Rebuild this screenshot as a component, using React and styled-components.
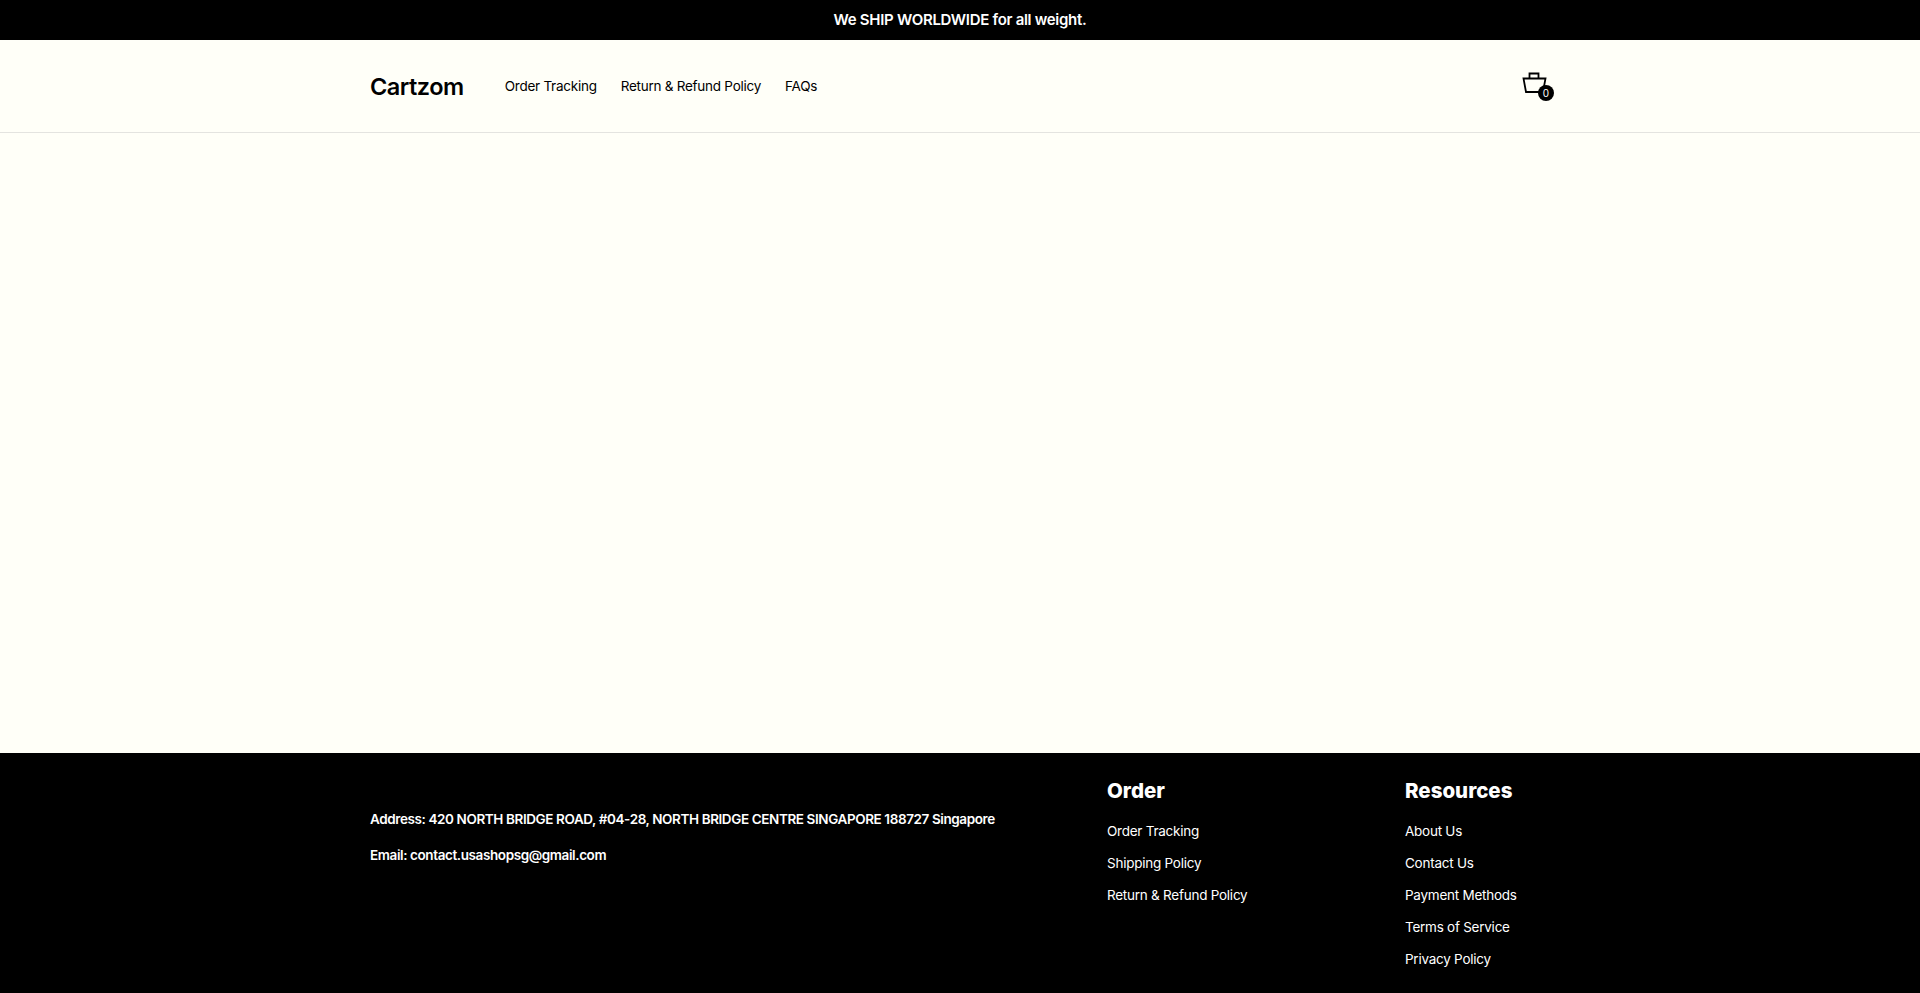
import React from 'react'
import styled, { createGlobalStyle } from 'styled-components'

const GlobalStyle = createGlobalStyle`
  html, body {
    margin: 0;
    padding: 0;
    background: #fffff8;
  }
  * {
    box-sizing: border-box;
  }
`

const Page = styled.div`
  display: flex;
  flex-direction: column;
  height: 993px;
  overflow: hidden;
  font-family: Inter, 'Noto Sans', sans-serif;
  color: #000;
`

const Announcement = styled.div`
  height: 40px;
  flex: none;
  display: flex;
  align-items: center;
  justify-content: center;
  padding-bottom: 1px;
  background: #000;
  color: #fff;
  font-size: 15px;
  font-weight: 600;
  letter-spacing: -0.3px;
`

const Header = styled.header`
  height: 93px;
  flex: none;
  border-bottom: 1px solid #e4e4e0;
`

const Container = styled.div`
  width: 1180px;
  margin: 0 auto;
`

const HeaderInner = styled(Container)`
  height: 100%;
  display: flex;
  align-items: center;
  justify-content: space-between;
`

const HeaderLeft = styled.div`
  display: flex;
  align-items: center;
`

const Logo = styled.a`
  font-size: 23.5px;
  font-weight: 600;
  letter-spacing: -0.5px;
  margin-right: 41px;
  padding-top: 1px;
`

const Nav = styled.nav`
  display: flex;
  gap: 24px;
`

const NavLink = styled.a`
  font-size: 13.5px;
  letter-spacing: -0.25px;
`

const CartButton = styled.div`
  position: relative;
  width: 32px;
  height: 32px;
  margin-right: -4px;
`

const CartCount = styled.span`
  position: absolute;
  right: 0;
  bottom: 1px;
  width: 16px;
  height: 16px;
  border-radius: 50%;
  background: #000;
  color: #fff;
  font-size: 10px;
  line-height: 16px;
  text-align: center;
`

const Main = styled.main`
  flex: 1;
`

const Footer = styled.footer`
  height: 240px;
  flex: none;
  background: #000;
  color: #fff;
  padding-top: 25px;
`

const FooterGrid = styled(Container)`
  display: grid;
  grid-template-columns: 737px 298px 145px;
`

const Contact = styled.div`
  padding-top: 32px;
  font-size: 13.5px;
  font-weight: 600;
  letter-spacing: -0.4px;
`

const ContactLine = styled.p`
  margin: 0 0 18px;
  line-height: 18px;
`

const ColumnTitle = styled.h3`
  margin: 0 0 11px;
  font-size: 20.5px;
  line-height: 26px;
  font-weight: 800;
`

const ColumnLink = styled.a`
  display: block;
  font-size: 13.5px;
  letter-spacing: -0.25px;
  line-height: 32px;
`

const columns = [
  { title: 'Order', links: ['Order Tracking', 'Shipping Policy', 'Return & Refund Policy'] },
  { title: 'Resources', links: ['About Us', 'Contact Us', 'Payment Methods', 'Terms of Service', 'Privacy Policy'] }
]

const CartIcon = () => (
  <svg width='26' height='24' viewBox='0 0 26 24' fill='none' stroke='#000' strokeWidth='1.8'>
    <path d='M1.5 8.5h22L21 22H4z' />
    <path d='M7.5 8.5V3.5h9v5' />
  </svg>
)

const App = () => {
  return (
    <Page>
      <GlobalStyle />
      <Announcement>We SHIP WORLDWIDE for all weight.</Announcement>
      <Header>
        <HeaderInner>
          <HeaderLeft>
            <Logo>Cartzom</Logo>
            <Nav>
              <NavLink>Order Tracking</NavLink>
              <NavLink>Return & Refund Policy</NavLink>
              <NavLink>FAQs</NavLink>
            </Nav>
          </HeaderLeft>
          <CartButton>
            <CartIcon />
            <CartCount>0</CartCount>
          </CartButton>
        </HeaderInner>
      </Header>
      <Main />
      <Footer>
        <FooterGrid>
          <Contact>
            <ContactLine>Address: 420 NORTH BRIDGE ROAD, #04-28, NORTH BRIDGE CENTRE SINGAPORE 188727 Singapore</ContactLine>
            <ContactLine>Email: contact.usashopsg@gmail.com</ContactLine>
          </Contact>
          {columns.map((column) => (
            <div key={column.title}>
              <ColumnTitle>{column.title}</ColumnTitle>
              {column.links.map((label) => (
                <ColumnLink key={label}>{label}</ColumnLink>
              ))}
            </div>
          ))}
        </FooterGrid>
      </Footer>
    </Page>
  )
}

export default App
